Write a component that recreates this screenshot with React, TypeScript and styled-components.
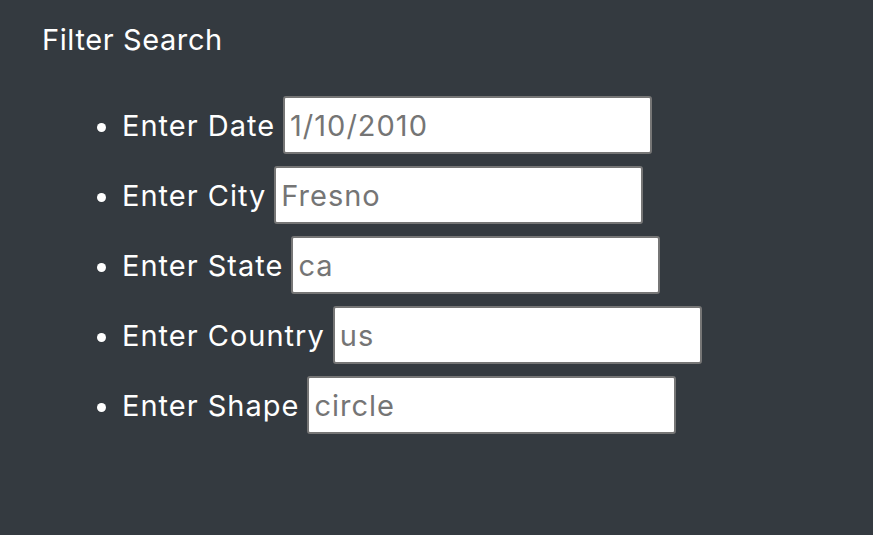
import React from "react";
import styled, { createGlobalStyle } from "styled-components";

const Global = createGlobalStyle`
  html, body { margin: 0; padding: 0; background: #343a40; }
  body { font-family: Inter, "Liberation Sans", sans-serif; }
`;

const Page = styled.div`
  width: 873px;
  height: 535px;
  background: #343a40;
  color: #ffffff;
  padding: 22px 0 0 42px;
  box-sizing: border-box;
`;

const Heading = styled.h4`
  margin: 0;
  font-size: 29px;
  letter-spacing: 0.6px;
  font-weight: 400;
  line-height: 36px;
`;

const List = styled.ul`
  margin: 38px 0 0 0;
  padding: 0 0 0 80px;
  list-style: disc;
  display: flex;
  flex-direction: column;
  gap: 12px;
`;

const Item = styled.li`
  font-size: 29px;
  letter-spacing: 1px;
  line-height: 60px;
  height: 58px;
`;

const Label = styled.label`
  margin-right: 8px;
`;

const Input = styled.input`
  box-sizing: border-box;
  width: 369px;
  height: 58px;
  border: 2px solid #767676;
  border-radius: 3px;
  padding: 0 5px;
  font-family: inherit;
  font-size: 29px;
  letter-spacing: 1px;
  vertical-align: top;
  &::placeholder { color: #757575; }
`;

const fields = [
  { label: "Enter Date", ph: "1/10/2010" },
  { label: "Enter City", ph: "Fresno" },
  { label: "Enter State", ph: "ca" },
  { label: "Enter Country", ph: "us" },
  { label: "Enter Shape", ph: "circle" },
];

export default function App() {
  return (
    <Page>
      <Global />
      <Heading>Filter Search</Heading>
      <List>
        {fields.map((f) => (
          <Item key={f.label}>
            <Label>{f.label}</Label>
            <Input type="text" placeholder={f.ph} />
          </Item>
        ))}
      </List>
    </Page>
  );
}
